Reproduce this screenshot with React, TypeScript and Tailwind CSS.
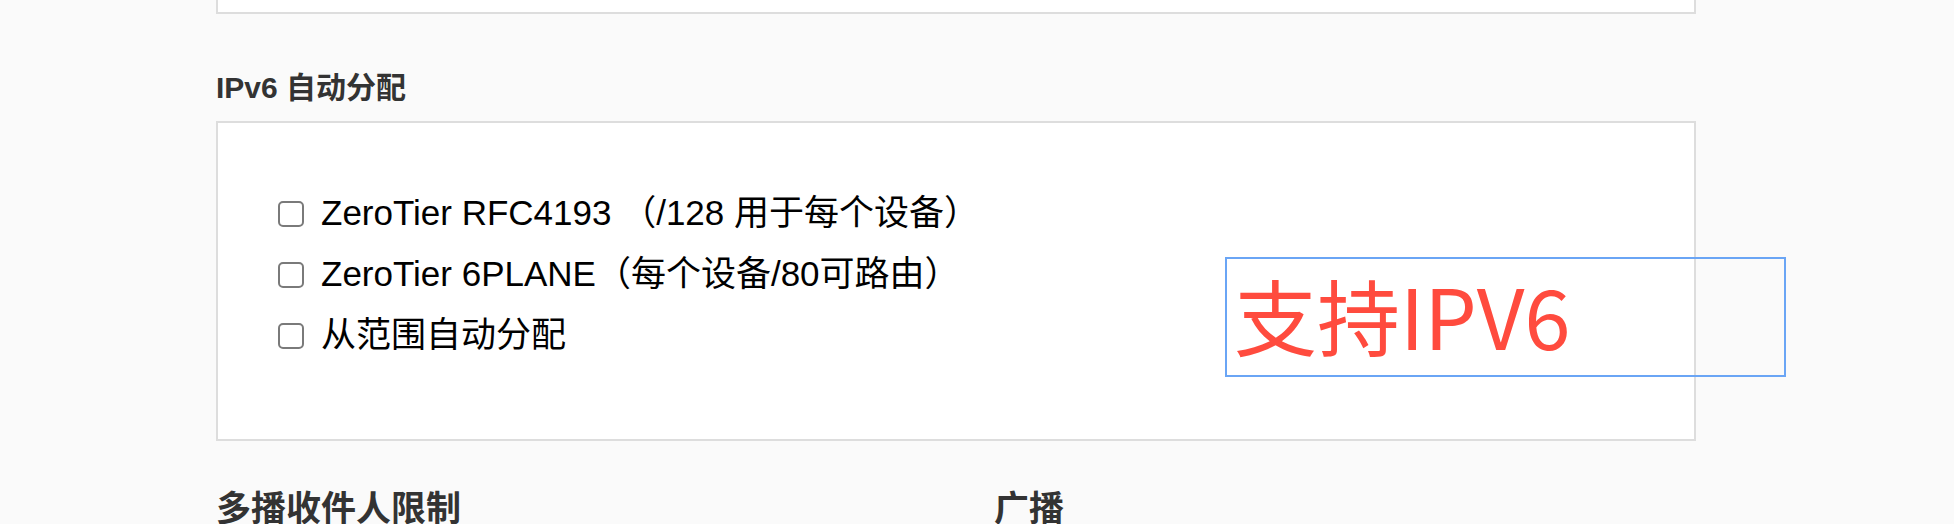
const options = [
  'ZeroTier RFC4193 （/128 用于每个设备）',
  'ZeroTier 6PLANE（每个设备/80可路由）',
  '从范围自动分配',
];

const Checkbox = () => (
  <span className="box-border h-[26px] w-[26px] shrink-0 rounded-[5px] border-2 border-[#7a7a7a] bg-white" />
);

export default function App() {
  return (
    <div
      className="relative h-[524px] w-full overflow-hidden bg-[#fafafa]"
      style={{ fontFamily: '"Liberation Sans", "Noto Sans CJK SC", sans-serif' }}
    >
      <div className="ml-[216px] w-[1480px]">
        <div className="h-[14px] border-x-2 border-b-2 border-[#dddddd] bg-white" />

        <h3 className="mt-[56px] text-[30px] font-bold leading-[36px] text-[#333333]">IPv6 自动分配</h3>

        <div className="mt-[15px] box-border h-[320px] border-2 border-[#dddddd] bg-white pl-[60px] pt-[60px]">
          {options.map((label) => (
            <label key={label} className="flex h-[61px] items-center gap-[17px] text-[35px] text-black">
              <Checkbox />
              <span className="whitespace-pre">{label}</span>
            </label>
          ))}
        </div>

        <div className="mt-[47px] grid grid-cols-2 gap-x-[76px]">
          <h3 className="text-[35px] font-bold leading-[42px] text-[#333333]">多播收件人限制</h3>
          <h3 className="text-[35px] font-bold leading-[42px] text-[#333333]">广播</h3>
        </div>
      </div>

      <div
        className="absolute left-[1225px] top-[257px] box-border flex h-[120px] w-[561px] items-center border-2 border-[#6aa5f5] pb-[5px] pl-[7px]"
        style={{ fontFamily: '"Noto Sans CJK SC", sans-serif' }}
      >
        <span className="text-[83px] leading-none text-[#ff4b3e]">支持IPV6</span>
      </div>
    </div>
  );
}
